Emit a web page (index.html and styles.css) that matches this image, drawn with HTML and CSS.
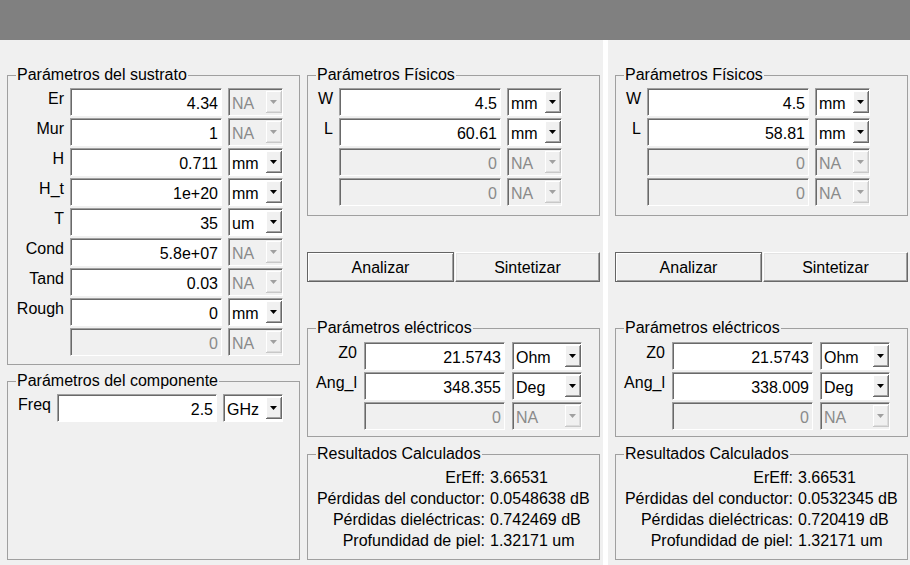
FILE: index.html
```html
<!DOCTYPE html>
<html lang="es">
<head>
<meta charset="utf-8">
<title>Microstrip</title>
<link rel="stylesheet" href="styles.css">
</head>
<body>
<div class="titlebar"></div>
<div class="main">
  <div class="col col-left">
    <fieldset class="group g-sustrato">
      <legend>Parámetros del sustrato</legend>
      <div class="form f-sustrato">
        <label class="lbl">Er</label><input class="field" value="4.34"><div class="combo off"><span class="ctext">NA</span><span class="dd"><svg width="7" height="4" viewBox="0 0 7 4"><path d="M0 0H7L3.5 4Z"/></svg></span></div>
        <label class="lbl">Mur</label><input class="field" value="1"><div class="combo off"><span class="ctext">NA</span><span class="dd"><svg width="7" height="4" viewBox="0 0 7 4"><path d="M0 0H7L3.5 4Z"/></svg></span></div>
        <label class="lbl">H</label><input class="field" value="0.711"><div class="combo"><span class="ctext">mm</span><span class="dd"><svg width="7" height="4" viewBox="0 0 7 4"><path d="M0 0H7L3.5 4Z"/></svg></span></div>
        <label class="lbl">H_t</label><input class="field" value="1e+20"><div class="combo"><span class="ctext">mm</span><span class="dd"><svg width="7" height="4" viewBox="0 0 7 4"><path d="M0 0H7L3.5 4Z"/></svg></span></div>
        <label class="lbl">T</label><input class="field" value="35"><div class="combo"><span class="ctext">um</span><span class="dd"><svg width="7" height="4" viewBox="0 0 7 4"><path d="M0 0H7L3.5 4Z"/></svg></span></div>
        <label class="lbl">Cond</label><input class="field" value="5.8e+07"><div class="combo off"><span class="ctext">NA</span><span class="dd"><svg width="7" height="4" viewBox="0 0 7 4"><path d="M0 0H7L3.5 4Z"/></svg></span></div>
        <label class="lbl">Tand</label><input class="field" value="0.03"><div class="combo off"><span class="ctext">NA</span><span class="dd"><svg width="7" height="4" viewBox="0 0 7 4"><path d="M0 0H7L3.5 4Z"/></svg></span></div>
        <label class="lbl">Rough</label><input class="field" value="0"><div class="combo"><span class="ctext">mm</span><span class="dd"><svg width="7" height="4" viewBox="0 0 7 4"><path d="M0 0H7L3.5 4Z"/></svg></span></div>
        <span class="lbl"></span><input class="field" value="0" disabled><div class="combo off"><span class="ctext">NA</span><span class="dd"><svg width="7" height="4" viewBox="0 0 7 4"><path d="M0 0H7L3.5 4Z"/></svg></span></div>
      </div>
    </fieldset>
    <fieldset class="group g-comp">
      <legend>Parámetros del componente</legend>
      <div class="form f-comp">
        <label class="lbl">Freq</label><input class="field" value="2.5"><div class="combo"><span class="ctext">GHz</span><span class="dd"><svg width="7" height="4" viewBox="0 0 7 4"><path d="M0 0H7L3.5 4Z"/></svg></span></div>
      </div>
    </fieldset>
  </div>

  <div class="col col-mid">
    <fieldset class="group g-fis">
      <legend>Parámetros Físicos</legend>
      <div class="form f-fis">
        <label class="lbl">W</label><input class="field" value="4.5"><div class="combo"><span class="ctext">mm</span><span class="dd"><svg width="7" height="4" viewBox="0 0 7 4"><path d="M0 0H7L3.5 4Z"/></svg></span></div>
        <label class="lbl">L</label><input class="field" value="60.61"><div class="combo"><span class="ctext">mm</span><span class="dd"><svg width="7" height="4" viewBox="0 0 7 4"><path d="M0 0H7L3.5 4Z"/></svg></span></div>
        <span class="lbl"></span><input class="field" value="0" disabled><div class="combo off"><span class="ctext">NA</span><span class="dd"><svg width="7" height="4" viewBox="0 0 7 4"><path d="M0 0H7L3.5 4Z"/></svg></span></div>
        <span class="lbl"></span><input class="field" value="0" disabled><div class="combo off"><span class="ctext">NA</span><span class="dd"><svg width="7" height="4" viewBox="0 0 7 4"><path d="M0 0H7L3.5 4Z"/></svg></span></div>
      </div>
    </fieldset>
    <div class="buttons">
      <button class="btn btn-default" type="button">Analizar</button>
      <button class="btn btn-alt" type="button">Sintetizar</button>
    </div>
    <fieldset class="group g-ele">
      <legend>Parámetros eléctricos</legend>
      <div class="form f-ele">
        <label class="lbl">Z0</label><input class="field" value="21.5743"><div class="combo"><span class="ctext">Ohm</span><span class="dd"><svg width="7" height="4" viewBox="0 0 7 4"><path d="M0 0H7L3.5 4Z"/></svg></span></div>
        <label class="lbl">Ang_l</label><input class="field" value="348.355"><div class="combo"><span class="ctext">Deg</span><span class="dd"><svg width="7" height="4" viewBox="0 0 7 4"><path d="M0 0H7L3.5 4Z"/></svg></span></div>
        <span class="lbl"></span><input class="field" value="0" disabled><div class="combo off"><span class="ctext">NA</span><span class="dd"><svg width="7" height="4" viewBox="0 0 7 4"><path d="M0 0H7L3.5 4Z"/></svg></span></div>
      </div>
    </fieldset>
    <fieldset class="group g-res">
      <legend>Resultados Calculados</legend>
      <div class="results">
        <span class="rl">ErEff:</span><span class="rv">3.66531</span>
        <span class="rl">Pérdidas del conductor:</span><span class="rv">0.0548638 dB</span>
        <span class="rl">Pérdidas dieléctricas:</span><span class="rv">0.742469 dB</span>
        <span class="rl">Profundidad de piel:</span><span class="rv">1.32171 um</span>
      </div>
    </fieldset>
  </div>

  <div class="splitter"></div>

  <div class="col col-right">
    <fieldset class="group g-fis">
      <legend>Parámetros Físicos</legend>
      <div class="form f-fis">
        <label class="lbl">W</label><input class="field" value="4.5"><div class="combo"><span class="ctext">mm</span><span class="dd"><svg width="7" height="4" viewBox="0 0 7 4"><path d="M0 0H7L3.5 4Z"/></svg></span></div>
        <label class="lbl">L</label><input class="field" value="58.81"><div class="combo"><span class="ctext">mm</span><span class="dd"><svg width="7" height="4" viewBox="0 0 7 4"><path d="M0 0H7L3.5 4Z"/></svg></span></div>
        <span class="lbl"></span><input class="field" value="0" disabled><div class="combo off"><span class="ctext">NA</span><span class="dd"><svg width="7" height="4" viewBox="0 0 7 4"><path d="M0 0H7L3.5 4Z"/></svg></span></div>
        <span class="lbl"></span><input class="field" value="0" disabled><div class="combo off"><span class="ctext">NA</span><span class="dd"><svg width="7" height="4" viewBox="0 0 7 4"><path d="M0 0H7L3.5 4Z"/></svg></span></div>
      </div>
    </fieldset>
    <div class="buttons">
      <button class="btn btn-default" type="button">Analizar</button>
      <button class="btn btn-alt" type="button">Sintetizar</button>
    </div>
    <fieldset class="group g-ele">
      <legend>Parámetros eléctricos</legend>
      <div class="form f-ele">
        <label class="lbl">Z0</label><input class="field" value="21.5743"><div class="combo"><span class="ctext">Ohm</span><span class="dd"><svg width="7" height="4" viewBox="0 0 7 4"><path d="M0 0H7L3.5 4Z"/></svg></span></div>
        <label class="lbl">Ang_l</label><input class="field" value="338.009"><div class="combo"><span class="ctext">Deg</span><span class="dd"><svg width="7" height="4" viewBox="0 0 7 4"><path d="M0 0H7L3.5 4Z"/></svg></span></div>
        <span class="lbl"></span><input class="field" value="0" disabled><div class="combo off"><span class="ctext">NA</span><span class="dd"><svg width="7" height="4" viewBox="0 0 7 4"><path d="M0 0H7L3.5 4Z"/></svg></span></div>
      </div>
    </fieldset>
    <fieldset class="group g-res">
      <legend>Resultados Calculados</legend>
      <div class="results">
        <span class="rl">ErEff:</span><span class="rv">3.66531</span>
        <span class="rl">Pérdidas del conductor:</span><span class="rv">0.0532345 dB</span>
        <span class="rl">Pérdidas dieléctricas:</span><span class="rv">0.720419 dB</span>
        <span class="rl">Profundidad de piel:</span><span class="rv">1.32171 um</span>
      </div>
    </fieldset>
  </div>
</div>
</body>
</html>
```

FILE: styles.css
```css
* { box-sizing: border-box; }

html, body {
  margin: 0;
  padding: 0;
}

body {
  width: 910px;
  height: 565px;
  overflow: hidden;
  background: #f0f0f0;
  color: #000;
  font-family: "Liberation Sans", Arial, sans-serif;
  font-size: 16px;
  line-height: 18px;
}

.titlebar {
  height: 40px;
  background: #808080;
}

.main {
  display: flex;
  height: 525px;
  padding-left: 7px;
}

.col {
  width: 293px;
  display: flex;
  flex-direction: column;
  padding-top: 26px;
  padding-bottom: 5px;
}

.col-mid {
  margin-left: 7px;
}

.splitter {
  width: 5px;
  margin-left: 3px;
  margin-right: 7px;
  background: #fff;
}

/* group boxes */
.group {
  margin: 0;
  padding: 0;
  min-width: 0;
  border: 1px solid #a0a0a0;
}

.group legend {
  margin-left: 8px;
  padding: 0 1px;
  line-height: 18px;
}

.g-comp {
  margin-top: 7px;
  flex: 1;
}

.g-ele {
  margin-top: 37px;
}

.g-res {
  margin-top: 8px;
  flex: 1;
}

/* form grids */
.form {
  display: grid;
  grid-auto-rows: 28px;
  row-gap: 2px;
  column-gap: 6px;
  padding: 4px 0 8px 0;
}

.f-sustrato { grid-template-columns: 56px 152px 55px; }
.f-comp { grid-template-columns: 43px 160px 60px; }
.f-fis { grid-template-columns: 25px 162px 55px; padding-bottom: 9px; }
.f-ele { grid-template-columns: 49px 141px 70px; column-gap: 7px; padding-top: 5px; padding-bottom: 6px; }

.lbl {
  text-align: right;
  padding-top: 2px;
  white-space: nowrap;
}

.field {
  display: block;
  width: 100%;
  height: 28px;
  margin: 0;
  padding: 4px 3px 0 3px;
  font: inherit;
  line-height: 18px;
  color: #000;
  text-align: right;
  background: #fff;
  border: 1px solid;
  border-color: #a0a0a0 #fff #fff #a0a0a0;
  box-shadow: inset 1px 1px 0 #696969;
  border-radius: 0;
  outline: none;
}

.field:disabled {
  background: #f0f0f0;
  color: #8a8a8a;
  -webkit-text-fill-color: #8a8a8a;
  opacity: 1;
}

/* combo boxes */
.combo {
  display: flex;
  align-items: stretch;
  height: 28px;
  padding: 2px 0 2px 3px;
  background: #fff;
  border: 1px solid;
  border-color: #a0a0a0 #fff #fff #a0a0a0;
  box-shadow: inset 1px 1px 0 #696969;
}

.combo.off {
  background: #f0f0f0;
  color: #8a8a8a;
}

.ctext {
  flex: 1;
  padding-top: 4px;
  white-space: nowrap;
  overflow: hidden;
}

.dd {
  width: 16px;
  display: flex;
  align-items: center;
  justify-content: center;
  background: #f0f0f0;
  border-right: 1px solid #696969;
  border-bottom: 1px solid #696969;
  box-shadow: inset 1px 1px 0 #fff, inset -1px -1px 0 #a0a0a0;
}

.dd svg {
  display: block;
  fill: #000;
}

.combo.off .dd {
  border-color: #c8c8c8;
  box-shadow: inset 1px 1px 0 #fff, inset -1px -1px 0 #dcdcdc;
}

.combo.off .dd svg {
  fill: #a0a0a0;
}

/* buttons */
.buttons {
  display: flex;
  gap: 1px;
  margin-top: 36px;
  height: 30px;
}

.btn {
  margin: 0;
  padding: 1px 0 0 0;
  font: inherit;
  color: #000;
  background: #f0f0f0;
  border-radius: 0;
}

.btn-default {
  width: 147px;
  border: 1px solid #646464;
  box-shadow: inset 1px 1px 0 #fff, inset -1px -1px 0 #a0a0a0;
}

.btn-alt {
  width: 145px;
  border: 1px solid;
  border-color: #fff #696969 #696969 #fff;
  box-shadow: inset -1px -1px 0 #a0a0a0, inset 1px 1px 0 #e3e3e3;
}

/* results */
.results {
  display: grid;
  grid-template-columns: 177px auto;
  column-gap: 5px;
  line-height: 21px;
  padding-top: 4px;
}

.rl {
  text-align: right;
  white-space: nowrap;
}

.rv {
  white-space: nowrap;
}
```
